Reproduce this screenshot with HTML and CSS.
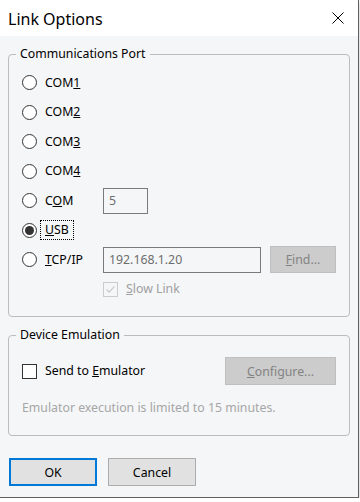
FILE: index.html
```html
<!DOCTYPE html>
<html lang="en">
<head>
  <meta charset="UTF-8" />
  <title>Link Options</title>
  <link rel="stylesheet" href="styles.css">
</head>
<body>

  <div class="window">
    <div class="titlebar">
      <span class="title">Link Options</span>
      <svg class="close" viewBox="0 0 12 12">
        <path d="M0.5 0.5L11.5 11.5M11.5 0.5L0.5 11.5"/>
      </svg>
    </div>

    <div class="content">
      <fieldset class="group ports">
        <legend>Communications Port</legend>
        <div class="row"><span class="radio"></span><span class="label">COM<u>1</u></span></div>
        <div class="row"><span class="radio"></span><span class="label">COM<u>2</u></span></div>
        <div class="row"><span class="radio"></span><span class="label">COM<u>3</u></span></div>
        <div class="row"><span class="radio"></span><span class="label">COM<u>4</u></span></div>
        <div class="row">
          <span class="radio"></span><span class="label wide-label">C<u>O</u>M</span>
          <span class="field port-num">5</span>
        </div>
        <div class="row"><span class="radio checked"></span><span class="label focused"><u>U</u>SB</span></div>
        <div class="row">
          <span class="radio"></span><span class="label wide-label"><u>T</u>CP/IP</span>
          <span class="field address">192.168.1.20</span>
          <span class="btn disabled find"><u>F</u>ind...</span>
        </div>
        <div class="row sub">
          <span class="check disabled">
            <svg viewBox="0 0 15 15"><path d="M3 7.5L6 10.5L12 4"/></svg>
          </span>
          <span class="label muted"><u>S</u>low Link</span>
        </div>
      </fieldset>

      <fieldset class="group emulation">
        <legend>Device Emulation</legend>
        <div class="row tall">
          <span class="check"></span>
          <span class="label">Send to <u>E</u>mulator</span>
          <span class="btn disabled configure"><u>C</u>onfigure...</span>
        </div>
        <div class="note">Emulator execution is limited to 15 minutes.</div>
      </fieldset>

      <div class="actions">
        <span class="btn default">OK</span>
        <span class="btn">Cancel</span>
      </div>
    </div>
  </div>

</body>
</html>
```

FILE: styles.css
```css
* {
  box-sizing: border-box;
}

body {
  margin: 0;
  background: #ffffff;
  font-family: "Noto Sans", "Open Sans", sans-serif;
  font-size: 12.3px;
  color: #000;
}

.window {
  width: 359px;
  height: 498px;
  background: #f5f6f8;
  border-right: 1px solid #5f5f5f;
  border-bottom: 1px solid #5f5f5f;
  box-shadow: 0 2px 4px rgba(0, 0, 0, 0.25);
  display: flex;
  flex-direction: column;
}

.titlebar {
  height: 36px;
  background: #ffffff;
  display: flex;
  align-items: center;
  justify-content: space-between;
  padding: 0 14px 0 8px;
}

.title {
  font-size: 16px;
  line-height: 20px;
  margin-top: 1px;
}

.close {
  width: 12px;
  height: 12px;
}

.close path {
  stroke: #000;
  stroke-width: 1;
  fill: none;
}

.group {
  margin: 10px 8px 0 8px;
  padding: 6px 13px 12px 13px;
  border: 1px solid #bcbcbc;
  border-radius: 4px;
  min-width: 0;
}

.group legend {
  padding: 0 4px;
  margin-left: -6px;
  line-height: 16px;
}

.row {
  display: flex;
  align-items: center;
  height: 29.5px;
}

.row.sub {
  padding-left: 81px;
}

.row.tall {
  height: 28px;
  margin-top: 8px;
}

.radio {
  width: 15px;
  height: 15px;
  border: 1px solid #333;
  border-radius: 50%;
  background: #fff;
  display: flex;
  align-items: center;
  justify-content: center;
  flex-shrink: 0;
}

.radio.checked::after {
  content: "";
  width: 9px;
  height: 9px;
  border-radius: 50%;
  background: #333;
}

.check {
  width: 15px;
  height: 15px;
  border: 1px solid #333;
  background: #fff;
  flex-shrink: 0;
}

.check svg {
  display: block;
  width: 13px;
  height: 13px;
}

.check.disabled {
  border-color: #cccccc;
  background: #f5f6f8;
}

.check.disabled path {
  stroke: #c6c6c6;
  stroke-width: 1.3;
  fill: none;
}

.label {
  margin-left: 8px;
  line-height: 16px;
}

.wide-label {
  width: 58px;
  flex-shrink: 0;
}

.label.focused {
  margin-left: 3px;
  padding: 1px 4px;
  border: 1px dotted #000;
}

.label.muted {
  color: #a0a0a0;
}

.field {
  height: 26px;
  border: 1px solid #7a7a7a;
  color: #6d6d6d;
  padding: 0 5px;
  display: flex;
  align-items: center;
}

.port-num {
  width: 45px;
}

.address {
  width: 158px;
}

.btn {
  width: 88px;
  height: 28px;
  border: 1px solid #adadad;
  background: #e1e1e1;
  display: flex;
  align-items: center;
  justify-content: center;
}

.btn.disabled {
  background: #cccccc;
  border-color: #bfbfbf;
  color: #838383;
}

.find {
  width: 66px;
  height: 27px;
  margin-left: auto;
}

.configure {
  width: 111px;
  margin-left: auto;
}

.note {
  margin-top: 15px;
  line-height: 16px;
  color: #a6a6a6;
}

.group.emulation {
  padding-bottom: 19px;
}

.actions {
  display: flex;
  gap: 11px;
  padding: 22px 9px 0 9px;
}

.btn.default {
  border: 2px solid #0078d7;
}
```
